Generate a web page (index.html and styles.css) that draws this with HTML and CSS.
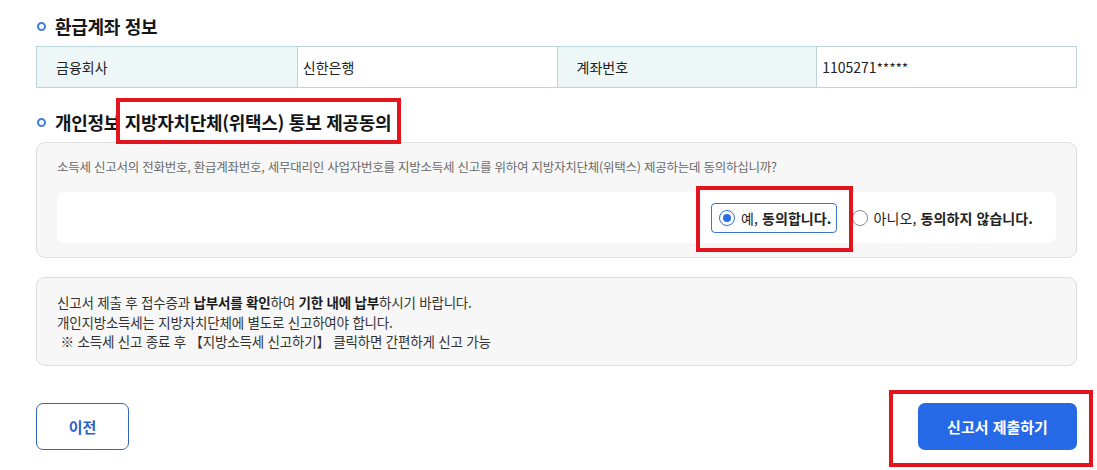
FILE: index.html
```html
<!DOCTYPE html>
<html lang="ko">
<head>
<meta charset="utf-8">
<title>환급계좌 정보</title>
<link rel="stylesheet" href="styles.css">
</head>
<body>
<div class="page">
  <h2 class="sec-title"><span class="bullet"></span>환급계좌 정보</h2>
  <div class="acct-table">
    <div class="cell label">금융회사</div>
    <div class="cell value">신한은행</div>
    <div class="cell label">계좌번호</div>
    <div class="cell value">1105271<span class="mask">*****</span></div>
  </div>

  <h2 class="sec-title second"><span class="bullet"></span>개인정보 지방자치단체(위택스) 통보 제공동의</h2>
  <div class="gray-box consent">
    <p class="desc">소득세 신고서의 전화번호, 환급계좌번호, 세무대리인 사업자번호를 지방소득세 신고를 위하여 지방자치단체(위택스) 제공하는데 동의하십니까?</p>
    <div class="choice-box">
      <label class="choice selected"><span class="radio on"></span><span>예, <b>동의합니다.</b></span></label>
      <label class="choice"><span class="radio"></span><span>아니오, <b>동의하지 않습니다.</b></span></label>
    </div>
  </div>

  <div class="gray-box notice">
    <p>신고서 제출 후 접수증과 <b>납부서를 확인</b>하여 <b>기한 내에 납부</b>하시기 바랍니다.</p>
    <p>개인지방소득세는 지방자치단체에 별도로 신고하여야 합니다.</p>
    <p class="last">&nbsp;※ 소득세 신고 종료 후 【지방소득세 신고하기】 클릭하면 간편하게 신고 가능</p>
  </div>

  <div class="actions">
    <button class="btn btn-prev">이전</button>
    <button class="btn btn-submit">신고서 제출하기</button>
  </div>
</div>
<div class="mark mark-title"></div>
<div class="mark mark-yes"></div>
<div class="mark mark-submit"></div>
</body>
</html>
```
FILE: styles.css
```css
html, body {
  margin: 0;
  padding: 0;
  background: #ffffff;
}
body {
  position: relative;
  width: 1097px;
  height: 470px;
  overflow: hidden;
  font-family: "Noto Sans CJK KR", "Noto Sans", sans-serif;
  color: #222;
}
.page {
  width: 1041px;
  padding: 16px 0 0 36px;
}
.sec-title {
  display: flex;
  align-items: center;
  margin: 0 0 10px 0;
  height: 20px;
  font-size: 18px;
  line-height: 20px;
  font-weight: 700;
  color: #151515;
  letter-spacing: -0.3px;
}
.sec-title.second {
  margin-top: 24px;
}
.bullet {
  width: 5px;
  height: 5px;
  border: 2px solid #3f7fdb;
  border-radius: 50%;
  margin: 1px 9px 0 1px;
}
.acct-table {
  display: grid;
  grid-template-columns: repeat(4, 1fr);
  border: 1px solid #bcd5d8;
  box-sizing: border-box;
  height: 42px;
}
.cell {
  display: flex;
  align-items: center;
  font-size: 14px;
  color: #222;
  border-left: 1px solid #bcd5d8;
  min-width: 0;
}
.cell:first-child {
  border-left: none;
}
.cell.label {
  background: #eef7f7;
  padding-left: 19px;
}
.cell.value {
  background: #ffffff;
  padding-left: 5px;
}
.mask {
  font-size: 13px;
  letter-spacing: 0.3px;
}
.gray-box {
  background: #f7f7f7;
  border: 1px solid #dedede;
  border-radius: 9px;
  box-sizing: border-box;
}
.consent {
  height: 116px;
  padding: 14px 20px 0 20px;
}
.desc {
  margin: 0;
  font-size: 12.5px;
  line-height: 20px;
  color: #6a6a6a;
  letter-spacing: -0.25px;
}
.choice-box {
  margin-top: 15px;
  height: 51px;
  background: #ffffff;
  border-radius: 7px;
  display: flex;
  align-items: center;
  justify-content: flex-end;
  padding-right: 23px;
  gap: 15px;
}
.choice {
  display: flex;
  align-items: center;
  height: 30px;
  font-size: 14px;
  color: #222;
  letter-spacing: 0.1px;
  gap: 6px;
}
.choice b {
  font-weight: 700;
}
.choice.selected {
  border: 1px solid #3a72d6;
  border-radius: 4px;
  padding: 0 4px 0 7px;
  box-sizing: border-box;
}
.radio {
  width: 16px;
  height: 16px;
  box-sizing: border-box;
  border: 1px solid #8a8a8a;
  border-radius: 50%;
  background: #fff;
  display: flex;
  align-items: center;
  justify-content: center;
}
.radio.on {
  border: 1px solid #2f6ee0;
}
.radio.on::after {
  content: "";
  width: 8px;
  height: 8px;
  border-radius: 50%;
  background: #2b6ce3;
}
.notice {
  margin-top: 19px;
  height: 89px;
  padding: 14px 20px 0 20px;
}
.notice p {
  margin: 0;
  font-size: 13.5px;
  line-height: 20px;
  color: #333;
  letter-spacing: -0.2px;
}
.notice p.last {
  line-height: 18px;
}
.notice b {
  font-weight: 700;
  color: #1a1a1a;
}
.actions {
  margin-top: 37px;
  display: flex;
  justify-content: space-between;
}
.btn {
  height: 47px;
  border-radius: 7px;
  font-family: "Noto Sans CJK KR", "Noto Sans", sans-serif;
  font-size: 15px;
  font-weight: 700;
  cursor: pointer;
}
.btn-prev {
  width: 93px;
  background: #ffffff;
  border: 1px solid #2f66c8;
  color: #2a62c6;
}
.btn-submit {
  width: 159px;
  background: #2569e6;
  border: none;
  color: #ffffff;
}
.mark {
  position: absolute;
  border: 4px solid #e2151f;
  box-sizing: border-box;
}
.mark-title {
  left: 116px;
  top: 98px;
  width: 285px;
  height: 46px;
}
.mark-yes {
  left: 696px;
  top: 186px;
  width: 157px;
  height: 66px;
}
.mark-submit {
  left: 889px;
  top: 390px;
  width: 204px;
  height: 77px;
}
```
